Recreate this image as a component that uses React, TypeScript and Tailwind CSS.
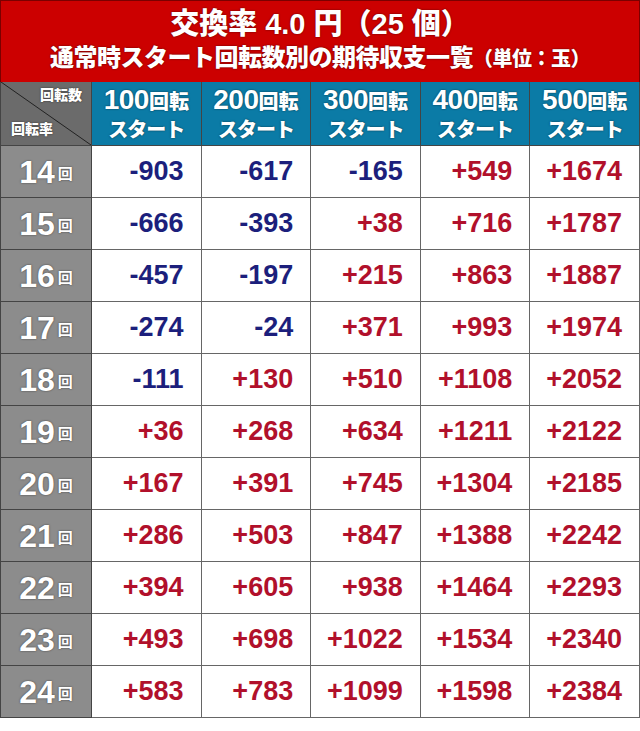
import React from 'react'

const cols = ['100', '200', '300', '400', '500']

const rows: [number, number[]][] = [
  [14, [-903, -617, -165, 549, 1674]],
  [15, [-666, -393, 38, 716, 1787]],
  [16, [-457, -197, 215, 863, 1887]],
  [17, [-274, -24, 371, 993, 1974]],
  [18, [-111, 130, 510, 1108, 2052]],
  [19, [36, 268, 634, 1211, 2122]],
  [20, [167, 391, 745, 1304, 2185]],
  [21, [286, 503, 847, 1388, 2242]],
  [22, [394, 605, 938, 1464, 2293]],
  [23, [493, 698, 1022, 1534, 2340]],
  [24, [583, 783, 1099, 1598, 2384]],
]

const sans = "font-['Liberation_Sans','Noto_Sans_CJK_JP',sans-serif]"
const shadow = '[text-shadow:0_0_2px_rgba(0,0,0,0.6)]'

export default function App() {
  return (
    <div className={`w-[640px] h-[731px] bg-white ${sans}`}>
      {/* Title */}
      <div className="h-[82px] bg-[#cc0000] border border-b-0 border-[#7a0000] flex flex-col items-center text-white font-black">
        <div className={`mt-[5px] text-[29px] leading-[36px] ${shadow}`}>
          交換率 4.0 円（25 個）
        </div>
        <div className={`text-[24px] leading-[32px] tracking-[-0.5px] ${shadow}`}>
          通常時スタート回転数別の期待収支一覧<span className="text-[20px]">（単位：玉）</span>
        </div>
      </div>

      {/* Table */}
      <div className="grid grid-cols-[91px_repeat(5,1fr)] border-l border-[#444]">
        {/* corner */}
        <div className="relative h-[64px] bg-[#6b6b6b] border-r border-b border-[#444] text-white font-black text-[14px]">
          <svg className="absolute inset-0" width="90" height="63" viewBox="0 0 90 63">
            <line x1="0" y1="0" x2="90" y2="63" stroke="#222" strokeWidth="1" />
          </svg>
          <div className={`absolute right-[9px] top-[3px] ${shadow}`}>回転数</div>
          <div className={`absolute left-[10px] bottom-[5px] ${shadow}`}>回転率</div>
        </div>
        {cols.map(c => (
          <div
            key={c}
            className={`h-[64px] bg-[#0b7ba6] border-r border-b border-[#444] flex flex-col items-center justify-center text-white font-black ${shadow}`}
          >
            <div className="leading-[28px]">
              <span className="text-[28px] tracking-[-0.5px]">{c}</span>
              <span className="text-[20px]">回転</span>
            </div>
            <div className="text-[20px] leading-[24px] tracking-[-1px]">スタート</div>
          </div>
        ))}

        {rows.map(([r, vals]) => (
          <React.Fragment key={r}>
            <div className="h-[52px] bg-[#8c8c8c] border-r border-b border-[#444] flex items-center justify-center text-white font-bold">
              <span className={`text-[32px] ${shadow}`}>{r}</span>
              <span className={`text-[15px] ml-[3px] mt-[6px] ${shadow}`}>回</span>
            </div>
            {vals.map((v, i) => (
              <div
                key={i}
                className="h-[52px] border-r border-b border-[#666] flex items-center justify-end pr-[17px]"
              >
                <span
                  className={`text-[27px] font-bold ${v < 0 ? 'text-[#1c1f7c]' : 'text-[#b1102b]'}`}
                >
                  {v < 0 ? v : `+${v}`}
                </span>
              </div>
            ))}
          </React.Fragment>
        ))}
      </div>
    </div>
  )
}
